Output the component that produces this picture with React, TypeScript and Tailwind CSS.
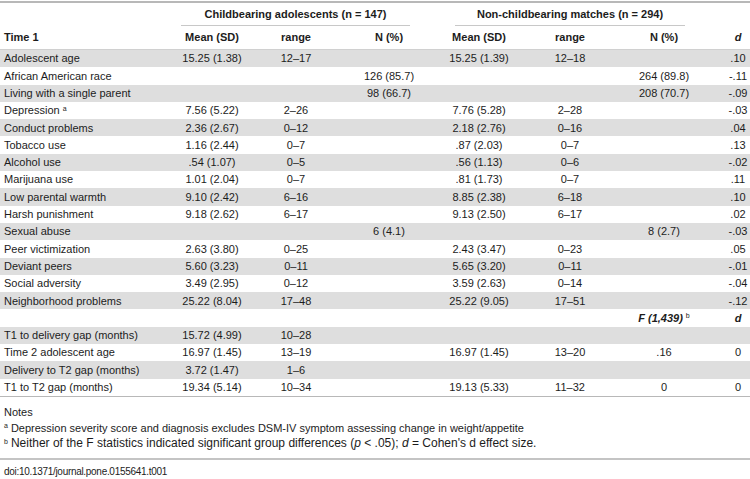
type Row = {
  label: string;
  sup?: string;
  cells: string[];
  fHeader?: boolean;
};

const rows: Row[] = [
  { label: "Adolescent age", cells: ["15.25 (1.38)", "12–17", "", "15.25 (1.39)", "12–18", "", ".10"] },
  { label: "African American race", cells: ["", "", "126 (85.7)", "", "", "264 (89.8)", "-.11"] },
  { label: "Living with a single parent", cells: ["", "", "98 (66.7)", "", "", "208 (70.7)", "-.09"] },
  { label: "Depression", sup: "a", cells: ["7.56 (5.22)", "2–26", "", "7.76 (5.28)", "2–28", "", "-.03"] },
  { label: "Conduct problems", cells: ["2.36 (2.67)", "0–12", "", "2.18 (2.76)", "0–16", "", ".04"] },
  { label: "Tobacco use", cells: ["1.16 (2.44)", "0–7", "", ".87 (2.03)", "0–7", "", ".13"] },
  { label: "Alcohol use", cells: [".54 (1.07)", "0–5", "", ".56 (1.13)", "0–6", "", "-.02"] },
  { label: "Marijuana use", cells: ["1.01 (2.04)", "0–7", "", ".81 (1.73)", "0–7", "", ".11"] },
  { label: "Low parental warmth", cells: ["9.10 (2.42)", "6–16", "", "8.85 (2.38)", "6–18", "", ".10"] },
  { label: "Harsh punishment", cells: ["9.18 (2.62)", "6–17", "", "9.13 (2.50)", "6–17", "", ".02"] },
  { label: "Sexual abuse", cells: ["", "", "6 (4.1)", "", "", "8 (2.7)", "-.03"] },
  { label: "Peer victimization", cells: ["2.63 (3.80)", "0–25", "", "2.43 (3.47)", "0–23", "", ".05"] },
  { label: "Deviant peers", cells: ["5.60 (3.23)", "0–11", "", "5.65 (3.20)", "0–11", "", "-.01"] },
  { label: "Social adversity", cells: ["3.49 (2.95)", "0–12", "", "3.59 (2.63)", "0–14", "", "-.04"] },
  { label: "Neighborhood problems", cells: ["25.22 (8.04)", "17–48", "", "25.22 (9.05)", "17–51", "", "-.12"] },
  { label: "", fHeader: true, cells: ["", "", "", "", "", "", ""] },
  { label: "T1 to delivery gap (months)", cells: ["15.72 (4.99)", "10–28", "", "", "", "", ""] },
  { label: "Time 2 adolescent age", cells: ["16.97 (1.45)", "13–19", "", "16.97 (1.45)", "13–20", ".16", "0"] },
  { label: "Delivery to T2 gap (months)", cells: ["3.72 (1.47)", "1–6", "", "", "", "", ""] },
  { label: "T1 to T2 gap (months)", cells: ["19.34 (5.14)", "10–34", "", "19.13 (5.33)", "11–32", "0", "0"] },
];

const grid = "grid grid-cols-[172px_80px_88px_98px_82px_100px_88px_42px]";

const App = () => {
  return (
    <div
      className="w-[750px] h-[479px] bg-white text-[#1c1c1c] text-[11px] overflow-hidden"
      style={{ fontFamily: '"Liberation Sans", Arial, sans-serif' }}
    >
      <div className="pt-[1px]">
        <div className="h-[2px] bg-[#b8b8b8]" />

        {/* group headers */}
        <div className="flex h-[23px] font-bold">
          <div className="w-[181px]" />
          <div className="w-[229px] border-b border-[#c8c8c8] flex items-center justify-center">
            Childbearing adolescents (n = 147)
          </div>
          <div className="w-[45px]" />
          <div className="w-[230px] border-b border-[#c8c8c8] flex items-center justify-center">
            Non-childbearing matches (n = 294)
          </div>
        </div>

        {/* column headers */}
        <div className={`${grid} h-[24px] items-center font-bold border-b border-[#d0d0d0]`}>
          <div className="pl-[4px]">Time 1</div>
          <div className="text-center">Mean (SD)</div>
          <div className="text-center">range</div>
          <div className="text-center">N (%)</div>
          <div className="text-center">Mean (SD)</div>
          <div className="text-center">range</div>
          <div className="text-center">N (%)</div>
          <div className="pl-[18px] text-center italic">d</div>
        </div>

        {/* body */}
        <div className="border-b border-[#b8b8b8]">
          {rows.map((r, i) => (
            <div
              key={i}
              className={`${grid} h-[17.3px] items-center ${i % 2 === 0 ? "bg-[#dedede]" : "bg-white"}`}
            >
              <div className="pl-[4px] whitespace-nowrap">
                {r.label}
                {r.sup && <sup className="text-[7px] ml-[3px]">{r.sup}</sup>}
              </div>
              {r.fHeader ? (
                <>
                  <div />
                  <div />
                  <div />
                  <div />
                  <div />
                  <div className="text-center whitespace-nowrap">
                    <span className="font-bold italic">F (1,439)</span>
                    <sup className="text-[7px] ml-[3px]">b</sup>
                  </div>
                  <div className="pl-[18px] text-center font-bold italic">d</div>
                </>
              ) : (
                r.cells.map((c, j) => (
                  <div
                    key={j}
                    className={`text-center whitespace-nowrap ${j === 6 ? "pl-[18px]" : ""}`}
                  >
                    {c}
                  </div>
                ))
              )}
            </div>
          ))}
        </div>

        {/* notes */}
        <div className="mt-[8.5px] pl-[4px] leading-[15.5px] border-b-2 border-[#c4c4c4] pb-[6px]">
          <div>Notes</div>
          <div className="whitespace-nowrap">
            <sup className="text-[7px] mr-[3px]">a</sup>
            Depression severity score and diagnosis excludes DSM-IV symptom assessing change in weight/appetite
          </div>
          <div className="whitespace-nowrap text-[12px]">
            <sup className="text-[7px] mr-[3px]">b</sup>
            Neither of the F statistics indicated significant group differences (<i>p</i> &lt; .05); <i>d</i> = Cohen's d effect size.
          </div>
        </div>

        <div className="mt-[4.5px] pl-[4px] text-[10px] tracking-[-0.3px] leading-[15px]">
          doi:10.1371/journal.pone.0155641.t001
        </div>
      </div>
    </div>
  );
};

export default App;
